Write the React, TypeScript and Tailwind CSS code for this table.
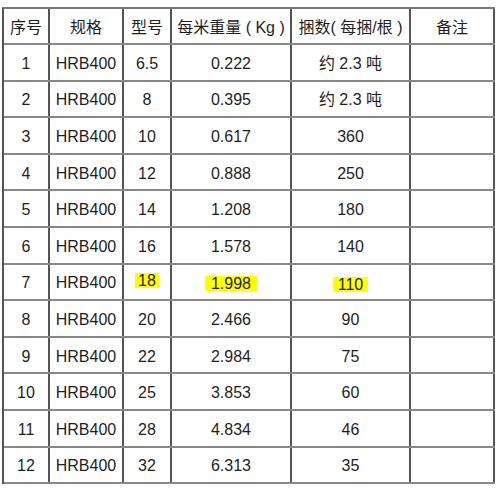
const rows: [string, string, string, string, string, boolean][] = [
  ['1', 'HRB400', '6.5', '0.222', '约 2.3 吨', false],
  ['2', 'HRB400', '8', '0.395', '约 2.3 吨', false],
  ['3', 'HRB400', '10', '0.617', '360', false],
  ['4', 'HRB400', '12', '0.888', '250', false],
  ['5', 'HRB400', '14', '1.208', '180', false],
  ['6', 'HRB400', '16', '1.578', '140', false],
  ['7', 'HRB400', '18', '1.998', '110', true],
  ['8', 'HRB400', '20', '2.466', '90', false],
  ['9', 'HRB400', '22', '2.984', '75', false],
  ['10', 'HRB400', '25', '3.853', '60', false],
  ['11', 'HRB400', '28', '4.834', '46', false],
  ['12', 'HRB400', '32', '6.313', '35', false],
];

const cols = 'grid grid-cols-[46px_74px_48px_120px_119px_84px]';
const cell = 'flex items-center justify-center pt-[3px] border-r-2 border-r-[#555]';

function Mark({ text, on, pad }: { text: string; on: boolean; pad: string }) {
  if (!on) return <span>{text}</span>;
  return <span className={`inline-block bg-[#ffff00] leading-[15px] ${pad}`}>{text}</span>;
}

export default function App() {
  return (
    <div className="h-[488px] w-[500px] bg-white pt-[7px] pl-[2px] font-['Liberation_Sans','Noto_Sans_CJK_SC',sans-serif] text-[16px] text-[#1e1e1e]">
      <div className="w-[493px] border-l-2 border-t-2 border-l-[#555] border-t-[#777]">
        <div className={`${cols} h-[36px] border-b-2 border-b-[#888]`}>
          <div className={cell}>序号</div>
          <div className={cell}>规格</div>
          <div className={cell}>型号</div>
          <div className={cell}>每米重量 ( Kg )</div>
          <div className={cell}>捆数( 每捆/根 )</div>
          <div className={cell}>备注</div>
        </div>
        {rows.map(([no, spec, size, weight, count, hl]) => (
          <div key={no} className={`${cols} h-[36.6px] border-b-2 border-b-[#888]`}>
            <div className={cell}>{no}</div>
            <div className={cell}>{spec}</div>
            <div className={cell}>
              <Mark text={size} on={hl} pad="px-[3px] -translate-y-[3px]" />
            </div>
            <div className={cell}>
              <Mark text={weight} on={hl} pad="px-[6px]" />
            </div>
            <div className={cell}>
              <Mark text={count} on={hl} pad="px-[5px] translate-y-[1px]" />
            </div>
            <div className={cell} />
          </div>
        ))}
      </div>
    </div>
  );
}
